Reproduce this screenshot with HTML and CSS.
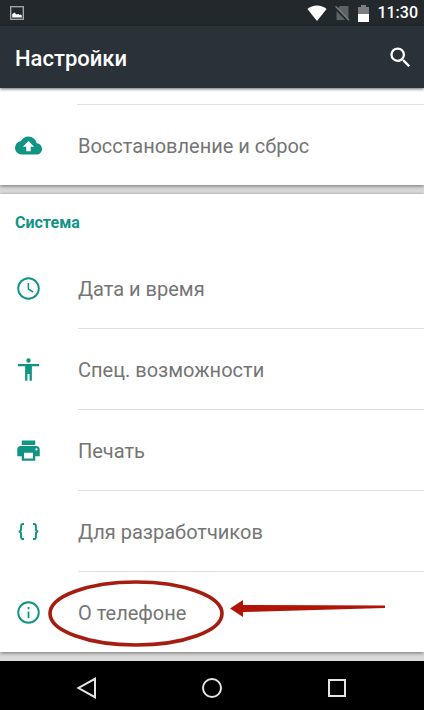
FILE: index.html
```html
<!DOCTYPE html>
<html lang="ru">
<head>
<meta charset="utf-8">
<meta name="viewport" content="width=device-width, initial-scale=1">
<title>Настройки</title>
<link rel="stylesheet" href="styles.css">
</head>
<body>
<div class="status-bar">
  <svg class="status-shot" viewBox="0 0 14 14" aria-hidden="true"><rect x=".7" y=".7" width="12.600" height="12.600" fill="none" stroke="#a9adaf" stroke-width="1.3"/><path fill="#fff" d="M2.200 11.500V8.200L4.500 6.600 6.500 8.600 8.400 8 9.500 9 10.400 8.400 11.800 9.600V11.500z"/></svg>
  <div class="status-icons">
    <svg class="status-wifi" viewBox="0 0 20 16" aria-hidden="true"><path fill="#fff" d="M10 16 .4 4Q4.500 .4 10 .4T19.600 4z"/></svg>
    <svg class="status-sim" viewBox="0 0 15 16" aria-hidden="true"><path fill="#5d6265" d="M5 1h8.500v14H1.500V5z"/><path stroke="#22282b" stroke-width="2.600" d="M-1 1.500 14 17"/><path stroke="#777c7e" stroke-width="1.500" d="M.5 1.200 14 15.300"/></svg>
    <svg class="status-battery" viewBox="0 0 11 17" aria-hidden="true"><path fill="#7b7f81" d="M3 0h5v2h3v7H0V2h3z"/><path fill="#fff" d="M0 9h11v8H0z"/></svg>
    <span class="clock">11:30</span>
  </div>
</div>
<header class="toolbar">
  <h1 class="title">Настройки</h1>
  <button class="search" type="button" aria-label="Поиск">
    <svg class="icon" viewBox="0 0 24 24" aria-hidden="true"><path fill="#fff" d="M15.500 14h-.79l-.28-.27A6.470 6.470 0 0 0 16 9.500 6.500 6.500 0 1 0 9.500 16c1.610 0 3.090-.59 4.230-1.570l.27.28v.79l5 4.990L20.490 19l-4.990-5zm-6 0a4.500 4.500 0 1 1 0-9 4.500 4.500 0 0 1 0 9z"/></svg>
  </button>
</header>
<main class="content">
  <section class="card card-first">
    <a class="row" href="#reset">
      <svg class="icon" viewBox="0 0 24 24" aria-hidden="true"><path d="M19.350 10.040A7.490 7.490 0 0 0 12 4C9.110 4 6.600 5.640 5.350 8.040A5.994 5.994 0 0 0 0 14c0 3.310 2.690 6 6 6h13c2.760 0 5-2.240 5-5 0-2.640-2.050-4.780-4.650-4.960zM14 13v4h-4v-4H7l5-5 5 5h-3z"/></svg>
      <span class="label">Восстановление и сброс</span>
    </a>
  </section>
  <section class="card">
    <h2 class="heading">Система</h2>
    <a class="row" href="#date">
      <svg class="icon" viewBox="0 0 24 24" aria-hidden="true"><path d="M11.990 2C6.470 2 2 6.480 2 12s4.470 10 9.990 10C17.520 22 22 17.520 22 12S17.520 2 11.990 2zM12 20.300a8.300 8.300 0 1 1 0-16.600 8.300 8.300 0 0 1 0 16.600zM12.500 7h-1.300v5.800l4.700 2.900.7-1.100-4.100-2.500z"/></svg>
      <span class="label">Дата и время</span>
    </a>
    <a class="row" href="#accessibility">
      <svg class="icon" viewBox="0 0 24 24" aria-hidden="true"><path d="M12 2a2 2 0 1 1 0 4 2 2 0 0 1 0-4zm9.500 7H15v13h-2v-6h-2v6H9V9H2.500V7h19z"/></svg>
      <span class="label">Спец. возможности</span>
    </a>
    <a class="row" href="#print">
      <svg class="icon" viewBox="0 0 24 24" aria-hidden="true"><path d="M19 8H5c-1.660 0-3 1.340-3 3v6h4v4h12v-4h4v-6c0-1.660-1.340-3-3-3zm-3 11H8v-5h8v5zm3-7a1 1 0 1 1 0-2 1 1 0 0 1 0 2zM18 3H6v4h12V3z"/></svg>
      <span class="label">Печать</span>
    </a>
    <a class="row" href="#developers">
      <svg class="icon icon-line" viewBox="0 0 24 24" aria-hidden="true"><path d="M8 5.300H7.200Q5.400 5.300 5.400 7.200V9.800Q5.400 12 3.300 12 5.400 12 5.400 14.200V16.800Q5.400 18.700 7.200 18.700H8M16 5.300H16.800Q18.600 5.300 18.600 7.200V9.800Q18.600 12 20.700 12 18.600 12 18.600 14.200V16.800Q18.600 18.700 16.800 18.700H16"/></svg>
      <span class="label">Для разработчиков</span>
    </a>
    <a class="row" href="#about">
      <svg class="icon" viewBox="0 0 24 24" aria-hidden="true"><path d="M11.200 17h1.600v-6h-1.600v6zM12 2a10 10 0 1 0 0 20 10 10 0 0 0 0-20zm0 18.300a8.300 8.300 0 1 1 0-16.600 8.300 8.300 0 0 1 0 16.600zM11.200 9h1.600V7.200h-1.600V9z"/></svg>
      <span class="label">О телефоне</span>
      <svg class="marker" viewBox="0 0 340 70" aria-hidden="true"><ellipse cx="88" cy="35.500" rx="86" ry="31.500" fill="none" stroke="#a51d10" stroke-width="3.600"/><path fill="#b01508" d="M182 30.500 195 22V27L337 27.500V30L195 34V39z"/></svg>
    </a>
  </section>
</main>
<nav class="nav-bar">
  <button class="nav-button" type="button" aria-label="Назад"><svg class="nav-icon" viewBox="0 0 22 22"><path d="M19 1.800V20.200L2.500 11z"/></svg></button>
  <button class="nav-button" type="button" aria-label="Домой"><svg class="nav-icon" viewBox="0 0 22 22"><circle cx="11" cy="11" r="9"/></svg></button>
  <button class="nav-button" type="button" aria-label="Недавние"><svg class="nav-icon" viewBox="0 0 22 22"><rect x="3" y="3" width="16" height="16"/></svg></button>
</nav>
</body>
</html>
```
FILE: styles.css
```css
* {
  box-sizing: border-box;
}

body {
  display: flex;
  flex-direction: column;
  min-height: 100vh;
  margin: 0;
  background: #dcdcdc;
  font-family: Roboto, "Noto Sans", sans-serif;
}

button {
  padding: 0;
  border: 0;
  background: none;
}

svg {
  display: block;
  flex: none;
}

.status-bar {
  display: flex;
  align-items: center;
  justify-content: space-between;
  height: 26px;
  padding: 0 6px 0 10px;
  background: #22282b;
}

.status-shot {
  width: 14px;
  height: 14px;
}

.status-icons {
  display: flex;
  align-items: center;
  gap: 8px;
}

.status-wifi {
  width: 20px;
  height: 16px;
}

.status-sim {
  width: 15px;
  height: 16px;
}

.status-battery {
  width: 11px;
  height: 17px;
}

.clock {
  color: #fff;
  font-size: 16px;
  font-weight: 500;
  line-height: 24px;
}

.toolbar {
  position: relative;
  display: flex;
  align-items: center;
  justify-content: space-between;
  height: 62px;
  padding: 0 10px 0 15px;
  background: #2a3238;
  box-shadow: 0 1px 3px rgba(0, 0, 0, 0.6);
}

.title {
  margin: 0;
  padding-top: 4px;
  color: #fff;
  font-size: 22px;
  font-weight: 500;
  line-height: 32px;
}

.icon {
  width: 27px;
  height: 27px;
  fill: #109585;
}

.icon-line {
  fill: none;
  stroke: #109585;
  stroke-width: 1.7;
}

.content {
  display: flex;
  flex: 1;
  flex-direction: column;
  gap: 9px;
  padding-bottom: 9px;
}

.card {
  background: #fff;
  box-shadow: 0 1px 4px rgba(0, 0, 0, 0.5);
}

.card-first {
  padding-top: 16px;
}

.card-first .row {
  border-top: 1px solid #e0e0e0;
  border-image: linear-gradient(to right, transparent 78px, #e0e0e0 78px) 1;
}

.heading {
  margin: 0;
  padding: 17px 15px 13px;
  color: #109585;
  font-size: 16px;
  font-weight: 700;
  line-height: 24px;
}

.row {
  position: relative;
  display: flex;
  align-items: stretch;
  gap: 36px;
  padding-left: 15px;
  text-decoration: none;
}

.row .icon {
  align-self: center;
}

.label {
  flex: 1;
  padding: 25px 0 23px;
  border-bottom: 1px solid #dedede;
  color: #757575;
  font-size: 20px;
  line-height: 32px;
}

.row:last-child .label {
  border-bottom: 0;
}

.marker {
  position: absolute;
  top: 6px;
  left: 48px;
  width: 340px;
  height: 70px;
}

.nav-bar {
  display: flex;
  align-items: center;
  justify-content: center;
  height: 49px;
  padding-top: 5px;
  background: #000;
}

.nav-button {
  display: flex;
  align-items: center;
  justify-content: center;
  width: 125px;
  height: 44px;
}

.nav-icon {
  width: 22px;
  height: 22px;
  fill: none;
  stroke: #e4e4e4;
  stroke-width: 2;
}
```
